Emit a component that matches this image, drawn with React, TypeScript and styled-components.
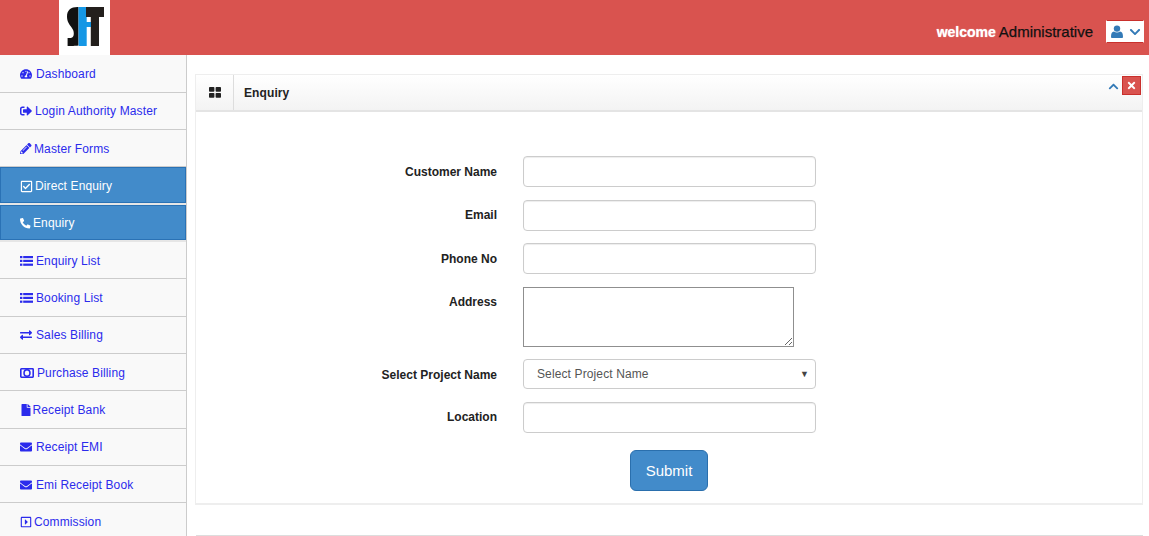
import React from "react";
import styled, { createGlobalStyle } from "styled-components";
import {
  FaTachometerAlt, FaSignOutAlt, FaPencilAlt, FaRegCheckSquare, FaPhoneAlt,
  FaExchangeAlt, FaFile, FaEnvelope, FaRegCaretSquareRight,
  FaChevronDown, FaChevronUp, FaTimes,
} from "react-icons/fa";

const Global = createGlobalStyle`
  html, body { margin: 0; padding: 0; height: 536px; overflow: hidden; background: #fff; }
  body { font-family: "Liberation Sans", Arial, sans-serif; font-size: 12px; color: #333; }
  * { box-sizing: border-box; }
`;

const Page = styled.div`
  width: 1149px; height: 536px; display: flex; flex-direction: column; overflow: hidden;
`;
const Header = styled.header`
  height: 55px; flex: none; background: #d9534f; display: flex; align-items: flex-start;
  padding-left: 59px; padding-right: 5px;
`;
const LogoBox = styled.div`
  width: 51px; height: 55px; background: #fff; display: flex; justify-content: center; padding: 7px 0 0 1px;
`;
const Welcome = styled.div`
  margin-left: auto; margin-right: 13px; margin-top: 23px; font-size: 15px; line-height: 17px; color: #111;
  -webkit-text-stroke: 0.25px #111;
`;
const WelcomeWord = styled.strong`
  color: #fff; font-weight: 700; font-size: 14px; margin-right: 3px; -webkit-text-stroke: 0;
  text-shadow: 0 0 1px rgba(255,255,255,.8);
`;
const UserButton = styled.div`
  width: 38px; height: 23px; margin-top: 20px; background: #fff; border: 1px solid #fff;
  border-top-color: #c9302c; border-bottom-color: #c9302c;
  display: flex; align-items: center; justify-content: center; gap: 6px; color: #337ab7; font-size: 12px;
  padding-left: 1px;
`;
const Body = styled.div` flex: 1; display: flex; min-height: 0; `;
const Sidebar = styled.nav`
  width: 187px; flex: none; border-right: 1px solid #ccc; background: #f9f9f9; overflow: hidden; padding-top: .5px;
`;
const MenuItem = styled.a<{ $active?: boolean }>`
  height: 37.33px; display: flex; align-items: center; padding-left: 20px; font-size: 12px;
  padding-top: ${(p) => (p.$active ? "2px" : ".5px")};
  letter-spacing: 0.12px; text-decoration: none;
  background: ${(p) => (p.$active ? "#428bca" : "#f9f9f9")};
  background-clip: padding-box;
  color: ${(p) => (p.$active ? "#fff" : "#2b2bec")};
  border-bottom: ${(p) => (p.$active ? "2px solid #e6e6e6" : "1.5px solid #ccc")};
  box-shadow: ${(p) => (p.$active ? "inset 0 0 0 1px #2a72b5" : "none")};
`;
const IconSlot = styled.span<{ $w: number }>`
  width: ${(p) => p.$w}px; flex: none; display: flex; align-items: center;
`;
const FaGlyph = styled.span<{ $h?: number }>`
  display: flex;
  svg { width: auto; height: ${(p) => p.$h ?? 12}px; display: block; }
`;
const Main = styled.main` flex: 1; padding: 19px 6px 0 8px; min-width: 0; `;
const Panel = styled.section` border: 1px solid #eee; border-bottom-width: 2px; height: 431px; `;
const PanelHead = styled.div`
  height: 37px; display: flex; align-items: stretch; border-bottom: 2px solid #e4e4e4;
  background: linear-gradient(#fff, #f3f3f3);
`;
const HeadIcon = styled.div`
  width: 38px; display: flex; align-items: center; justify-content: center; border-right: 1px solid #ddd; color: #222;
`;
const HeadTitle = styled.h2`
  margin: 0; padding-left: 10px; font-size: 12px; font-weight: 700; color: #222; align-self: center; letter-spacing: .1px;
`;
const HeadTools = styled.div`
  margin-left: auto; display: flex; align-items: flex-start; gap: 3px; padding: 1px 1px 0 0; color: #337ab7; font-size: 11px;
  & > svg { margin-top: 5px; }
`;
const CloseBtn = styled.span`
  width: 19px; height: 19px; background: #d9534f; border: 1px solid #c9302c; color: #fff; display: flex;
  align-items: center; justify-content: center; font-size: 11px;
`;
const Form = styled.form`
  padding-top: 44px; display: grid; grid-template-columns: 301px 293px; column-gap: 26px; row-gap: 12.5px; align-items: start;
`;
const Label = styled.label`
  text-align: right; font-weight: 700; font-size: 12px; color: #222; padding-top: 8.5px; line-height: 15px;
`;
const Input = styled.input`
  width: 293px; height: 31px; border: 1px solid #ccc; border-radius: 4px; background: #fff; box-shadow: inset 0 1px 1px rgba(0,0,0,.075);
`;
const TextArea = styled.textarea`
  display: block; width: 271px; height: 60px; border: 1px solid #8f8f8f; padding: 2px; border-radius: 0; margin: 0;
`;
const SelectBox = styled.div`
  width: 293px; height: 30px; border: 1px solid #ccc; border-radius: 4px; background: #fff; display: flex; align-items: center;
  padding: 0 6px 0 13px; font-size: 12px; letter-spacing: .12px; color: #555; justify-content: space-between;
`;
const Caret = styled.i` font-style: normal; font-size: 9px; color: #444; `;
const Submit = styled.button`
  grid-column: 2; margin: 5px 0 0 107px; width: 78px; height: 41px; background: #428bca; border: 1px solid #2a6fad; border-radius: 6px;
  color: #fff; font: 15px "Liberation Sans", Arial, sans-serif;
`;
const NextPanel = styled.div` margin: 30px 0 0 1px; border-top: 2px solid #ddd; height: 2px; `;

const Logo = () => (
  <svg width="37" height="39" viewBox="0 0 37 39" aria-hidden="true">
    <path d="M10.5 0C4 0 0 3 0 9.500c0 5 2.400 8 4.600 11 1.400 2 2.200 3.600 2.200 6 0 2.400-.8 4-3 4.400L.6 31v8H5c3.500 0 6.500-.4 6.500-.4V0z" fill="#111" />
    <path d="M11.500 0h8.200v15h8v5h-8v19h-8z" fill="#1597e5" />
    <path d="M19 0h18v10h-5v29h-8.200V10H19z" fill="#231f1c" />
    <path d="M19.700 15h4.100v5h-4.100z" fill="#1597e5" />
  </svg>
);
const ThLarge = () => (
  <svg width="12" height="11" viewBox="0 0 12 11" fill="#222" aria-hidden="true">
    <rect width="5.4" height="4.8" rx=".8" /><rect x="6.6" width="5.4" height="4.8" rx=".8" />
    <rect y="6" width="5.4" height="4.8" rx=".8" /><rect x="6.6" y="6" width="5.4" height="4.8" rx=".8" />
  </svg>
);
const ListIcon = () => (
  <svg width="13" height="10" viewBox="0 0 13 10" fill="currentColor" aria-hidden="true">
    <rect width="2.4" height="2.2" /><rect x="3.2" width="9.800" height="2.2" />
    <rect y="3.800" width="2.4" height="2.2" /><rect x="3.2" y="3.800" width="9.800" height="2.2" />
    <rect y="7.600" width="2.4" height="2.2" /><rect x="3.2" y="7.600" width="9.800" height="2.2" />
  </svg>
);
const MoneyIcon = () => (
  <svg width="14" height="10" viewBox="0 0 14 10" aria-hidden="true">
    <rect x=".8" y=".8" width="12.400" height="8.400" rx=".6" fill="none" stroke="currentColor" strokeWidth="1.6" />
    <ellipse cx="7" cy="5" rx="3" ry="3.300" fill="none" stroke="currentColor" strokeWidth="1.5" />
  </svg>
);
const UserIcon = () => (
  <svg width="12" height="13" viewBox="0 0 12 13" fill="currentColor" aria-hidden="true">
    <circle cx="6" cy="3.600" r="3.200" />
    <path d="M0 12.200c0-3.400.8-5.400 3-5.600.9.6 1.900.9 3 .9s2.100-.3 3-.9c2.200.2 3 2.200 3 5.600 0 .5-.4.8-1 .8H1c-.6 0-1-.3-1-.8z" />
  </svg>
);

type Item = { icon: React.ReactNode; label: string; slot: number; active?: boolean };
const menu: Item[] = [
  { icon: <FaGlyph><FaTachometerAlt /></FaGlyph>, label: "Dashboard", slot: 16 },
  { icon: <FaGlyph><FaSignOutAlt /></FaGlyph>, label: "Login Authority Master", slot: 15 },
  { icon: <FaGlyph $h={11.5}><FaPencilAlt /></FaGlyph>, label: "Master Forms", slot: 14 },
  { icon: <FaGlyph $h={13}><FaRegCheckSquare /></FaGlyph>, label: "Direct Enquiry", slot: 15, active: true },
  { icon: <FaGlyph $h={10.5}><FaPhoneAlt /></FaGlyph>, label: "Enquiry", slot: 13, active: true },
  { icon: <ListIcon />, label: "Enquiry List", slot: 16 },
  { icon: <ListIcon />, label: "Booking List", slot: 16 },
  { icon: <FaGlyph><FaExchangeAlt /></FaGlyph>, label: "Sales Billing", slot: 16 },
  { icon: <MoneyIcon />, label: "Purchase Billing", slot: 17 },
  { icon: <FaGlyph><FaFile /></FaGlyph>, label: "Receipt Bank", slot: 12.5 },
  { icon: <FaGlyph><FaEnvelope /></FaGlyph>, label: "Receipt EMI", slot: 16 },
  { icon: <FaGlyph><FaEnvelope /></FaGlyph>, label: "Emi Receipt Book", slot: 16 },
  { icon: <FaGlyph><FaRegCaretSquareRight /></FaGlyph>, label: "Commission", slot: 14 },
];

export default function App() {
  return (
    <Page>
      <Global />
      <Header>
        <LogoBox><Logo /></LogoBox>
        <Welcome><WelcomeWord>welcome</WelcomeWord>Administrative</Welcome>
        <UserButton><UserIcon /><FaChevronDown /></UserButton>
      </Header>
      <Body>
        <Sidebar>
          {menu.map((m) => (
            <MenuItem key={m.label} $active={m.active}>
              <IconSlot $w={m.slot}>{m.icon}</IconSlot>{m.label}
            </MenuItem>
          ))}
        </Sidebar>
        <Main>
          <Panel>
            <PanelHead>
              <HeadIcon><ThLarge /></HeadIcon>
              <HeadTitle>Enquiry</HeadTitle>
              <HeadTools><FaChevronUp /><CloseBtn><FaTimes /></CloseBtn></HeadTools>
            </PanelHead>
            <Form>
              <Label>Customer Name</Label><Input />
              <Label>Email</Label><Input />
              <Label>Phone No</Label><Input />
              <Label>Address</Label><TextArea />
              <Label>Select Project Name</Label><SelectBox>Select Project Name<Caret>▼</Caret></SelectBox>
              <Label>Location</Label><Input />
              <Submit type="button">Submit</Submit>
            </Form>
          </Panel>
          <NextPanel />
        </Main>
      </Body>
    </Page>
  );
}
